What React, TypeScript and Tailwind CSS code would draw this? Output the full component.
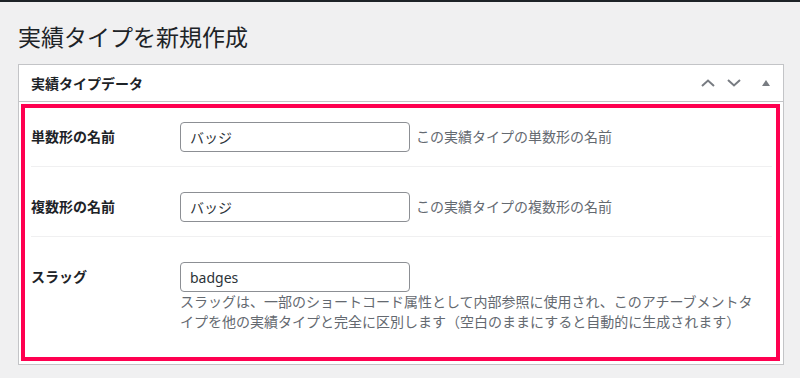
import React from "react";

const font = { fontFamily: '"Noto Sans", "Noto Sans CJK JP", sans-serif' };

function Row({
  label,
  value,
  desc,
  below,
  pt,
  pb,
  divider,
}: {
  label: string;
  value: string;
  desc: string;
  below?: boolean;
  pt: string;
  pb: string;
  divider?: boolean;
}) {
  return (
    <div className={`flex ml-[6px] mr-[4px] ${pt} ${pb} ${divider ? "border-b border-[#f0f0f1]" : ""}`}>
      <div className="w-[149px] shrink-0 text-[14px] font-bold leading-[30px] text-[#1d2327]">{label}</div>
      <div className="flex-1 pr-[10px]">
        <div className={below ? "" : "flex items-center"}>
          <input
            readOnly
            defaultValue={value}
            className="w-[230px] h-[30px] border border-[#8c8f94] rounded-[4px] px-[9px] text-[14px] text-[#2c3338] bg-white outline-none"
            style={font}
          />
          {!below && <span className="ml-[6px] text-[14px] text-[#646970] leading-[20px]">{desc}</span>}
        </div>
        {below && <p className="text-[14px] leading-[20px] text-[#646970]">{desc}</p>}
      </div>
    </div>
  );
}

export default function App() {
  return (
    <div className="min-h-screen bg-[#f0f0f1]" style={font}>
      <div className="h-[2px] bg-[#1d2327]" />
      <div className="pl-[18px] pr-[16px]">
        <h1 className="pt-[21px] pb-[12px] text-[23px] leading-[29px] font-normal text-[#1d2327]">実績タイプを新規作成</h1>
        <div className="border border-[#c3c4c7] bg-white">
          <div className="h-[37px] border-b border-[#c3c4c7] flex items-center pl-[12px] pr-[13px]">
            <span className="text-[14px] font-bold text-[#1d2327]">実績タイプデータ</span>
            <div className="ml-auto flex items-center">
              <svg width="14" height="8" viewBox="0 0 14 8" className="mr-[12px]">
                <path d="M1 7 L7 1.5 L13 7" fill="none" stroke="#787c82" strokeWidth="2" />
              </svg>
              <svg width="14" height="8" viewBox="0 0 14 8" className="mr-[21px]">
                <path d="M1 1 L7 6.5 L13 1" fill="none" stroke="#787c82" strokeWidth="2" />
              </svg>
              <svg width="8" height="6" viewBox="0 0 8 6">
                <path d="M4 0 L8 6 L0 6 Z" fill="#787c82" />
              </svg>
            </div>
          </div>
          <div className="pt-[2px] pl-[2px] pr-[3px] pb-[3px]">
            <div className="border-[4px] border-[#ff0050]">
              <Row label="単数形の名前" value="バッジ" desc="この実績タイプの単数形の名前" pt="pt-[14px]" pb="pb-[14px]" divider />
              <Row label="複数形の名前" value="バッジ" desc="この実績タイプの複数形の名前" pt="pt-[25px]" pb="pb-[14px]" divider />
              <Row
                label="スラッグ"
                value="badges"
                desc="スラッグは、一部のショートコード属性として内部参照に使用され、このアチーブメントタイプを他の実績タイプと完全に区別します（空白のままにすると自動的に生成されます）"
                below
                pt="pt-[25px]"
                pb="pb-[25px]"
              />
            </div>
          </div>
        </div>
      </div>
    </div>
  );
}
